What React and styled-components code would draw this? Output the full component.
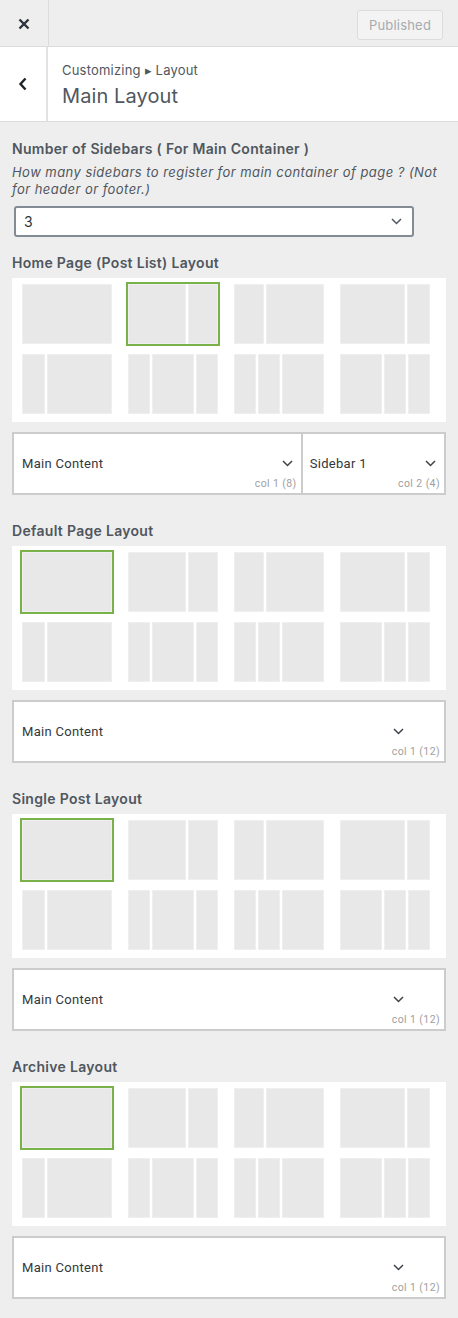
import React from 'react';
import styled, { createGlobalStyle } from 'styled-components';

const sysFont = `Inter, "Noto Sans", "Liberation Sans", sans-serif`;
const green = '#7ab24a';
const textGray = '#50575e';

const GlobalStyle = createGlobalStyle`
  html, body {
    margin: 0;
    padding: 0;
    background: #eeeeee;
  }
  body {
    font-family: ${sysFont};
    color: ${textGray};
  }
  * {
    box-sizing: border-box;
  }
`;

const Page = styled.div`
  width: 458px;
  min-height: 1318px;
  background: #eeeeee;
`;

const TopBar = styled.div`
  display: flex;
  align-items: center;
  justify-content: space-between;
  height: 47px;
  background: #eeeeee;
  border-bottom: 1px solid #dcdcde;
`;

const CloseButton = styled.div`
  display: flex;
  align-items: center;
  justify-content: center;
  width: 49px;
  height: 46px;
  padding-top: 1px;
  border-right: 1px solid #dcdcde;
`;

const PublishedButton = styled.div`
  margin: 4px 15px 0 0;
  width: 86px;
  height: 30px;
  display: flex;
  align-items: center;
  justify-content: center;
  border: 1px solid #dcdcde;
  border-radius: 3px;
  background: #f3f3f3;
  color: #a7aaad;
  font-size: 13px;
  letter-spacing: 0.2px;
`;

const TitleBar = styled.div`
  display: flex;
  height: 75px;
  background: #fff;
  border-bottom: 1px solid #dcdcde;
`;

const BackButton = styled.div`
  display: flex;
  align-items: center;
  justify-content: center;
  width: 48px;
  border-right: 2px solid #e2e2e4;
`;

const TitleText = styled.div`
  display: flex;
  flex-direction: column;
  justify-content: center;
  padding: 1px 0 0 14px;
`;

const Breadcrumb = styled.div`
  font-size: 13px;
  line-height: 18px;
  color: ${textGray};
  letter-spacing: 0.2px;
`;

const PageTitle = styled.div`
  font-size: 20px;
  line-height: 26px;
  margin-top: 4px;
  color: ${textGray};
  letter-spacing: 0.1px;
`;

const Content = styled.div`
  padding: 17px 12px 20px;
`;

const Label = styled.div`
  font-size: 14px;
  font-weight: 600;
  line-height: 20px;
  color: ${textGray};
  letter-spacing: 0.3px;
`;

const Description = styled.div`
  margin-top: 5px;
  font-size: 13px;
  font-style: italic;
  line-height: 17px;
  color: ${textGray};
  letter-spacing: 0.45px;
`;

const NativeSelect = styled.div`
  display: flex;
  align-items: center;
  justify-content: space-between;
  margin: 8px 0 16px 2px;
  width: 400px;
  height: 31px;
  padding: 0 10px 0 8px;
  background: #fff;
  border: 2px solid #838c95;
  border-radius: 3px;
  font-size: 14px;
  color: #2c3338;
`;

const Section = styled.section`
  margin-bottom: 26px;
`;

const LayoutPanel = styled.div`
  margin-top: 5px;
  background: #fff;
  padding: 6px 0 8px 10px;
  display: grid;
  grid-template-columns: repeat(4, 90px);
  column-gap: 16px;
  row-gap: 10px;
`;

const Thumb = styled.div`
  display: flex;
  gap: 2px;
  width: 90px;
  height: 60px;
  outline: ${p => (p.$active ? `2px solid ${green}` : 'none')};
  background: #fff;
`;

const Cell = styled.div`
  flex: ${p => p.$span} 1 0;
  background: #e8e8e8;
  border: 1px solid #efefef;
`;

const ColumnRow = styled.div`
  display: flex;
  margin-top: 10px;
  height: 63px;
  background: #fff;
  border: 2px solid #cccccc;
`;

const Column = styled.div`
  flex: 0 0 ${p => (p.$span / 12) * 100}%;
  display: flex;
  flex-direction: column;
  padding: 20px 4px 0 ${p => (p.$first ? 8 : 7)}px;
  border-left: ${p => (p.$first ? 'none' : '2px solid #cccccc')};
`;

const ColumnSelect = styled.div`
  display: flex;
  align-items: center;
  justify-content: space-between;
  width: 100%;
  max-width: 386px;
  height: 18px;
  padding-right: 4px;
  font-family: Roboto, "Liberation Sans", sans-serif;
  font-size: 13px;
  color: #32373c;
  letter-spacing: 0.3px;
`;

const ColumnNote = styled.div`
  margin-top: 5px;
  text-align: right;
  font-family: Roboto, "Liberation Sans", sans-serif;
  font-size: 10.5px;
  line-height: 14px;
  color: #a0a0a0;
  letter-spacing: 0.4px;
`;

const CloseIcon = () => (
  <svg width="12" height="12" viewBox="0 0 12 12">
    <path d="M1.5 1.5 L10.5 10.5 M10.5 1.5 L1.5 10.5" stroke="#2c3338" strokeWidth="2.4" strokeLinecap="butt" />
  </svg>
);

const BackIcon = () => (
  <svg width="10" height="14" viewBox="0 0 10 14">
    <path d="M7.5 1.5 L2.5 7 L7.5 12.5" stroke="#1d2327" strokeWidth="2.4" fill="none" />
  </svg>
);

const Chevron = ({ color = '#50575e' }) => (
  <svg width="11" height="7" viewBox="0 0 11 7">
    <path d="M1 1 L5.5 5.5 L10 1" stroke={color} strokeWidth="1.5" fill="none" />
  </svg>
);

const thumbs = [
  [12],
  [8, 4],
  [4, 8],
  [9, 3],
  [3, 9],
  [3, 6, 3],
  [3, 3, 6],
  [6, 3, 3],
];

const sections = [
  {
    title: 'Home Page (Post List) Layout',
    active: 1,
    columns: [
      { label: 'Main Content', note: 'col 1 (8)', span: 8 },
      { label: 'Sidebar 1', note: 'col 2 (4)', span: 4 },
    ],
  },
  {
    title: 'Default Page Layout',
    active: 0,
    columns: [{ label: 'Main Content', note: 'col 1 (12)', span: 12 }],
  },
  {
    title: 'Single Post Layout',
    active: 0,
    columns: [{ label: 'Main Content', note: 'col 1 (12)', span: 12 }],
  },
  {
    title: 'Archive Layout',
    active: 0,
    columns: [{ label: 'Main Content', note: 'col 1 (12)', span: 12 }],
  },
];

const LayoutSection = ({ title, active, columns }) => (
  <Section>
    <Label>{title}</Label>
    <LayoutPanel>
      {thumbs.map((cells, i) => (
        <Thumb key={i} $active={i === active}>
          {cells.map((span, j) => (
            <Cell key={j} $span={span} />
          ))}
        </Thumb>
      ))}
    </LayoutPanel>
    <ColumnRow>
      {columns.map((col, i) => (
        <Column key={i} $span={col.span} $first={i === 0}>
          <ColumnSelect>
            <span>{col.label}</span>
            <Chevron color="#3c434a" />
          </ColumnSelect>
          <ColumnNote>{col.note}</ColumnNote>
        </Column>
      ))}
    </ColumnRow>
  </Section>
);

export default function App() {
  return (
    <Page>
      <GlobalStyle />
      <TopBar>
        <CloseButton>
          <CloseIcon />
        </CloseButton>
        <PublishedButton>Published</PublishedButton>
      </TopBar>
      <TitleBar>
        <BackButton>
          <BackIcon />
        </BackButton>
        <TitleText>
          <Breadcrumb>Customizing ▸ Layout</Breadcrumb>
          <PageTitle>Main Layout</PageTitle>
        </TitleText>
      </TitleBar>
      <Content>
        <Label>Number of Sidebars ( For Main Container )</Label>
        <Description>
          How many sidebars to register for main container of page ? (Not for header or footer.)
        </Description>
        <NativeSelect>
          <span>3</span>
          <Chevron color="#50575e" />
        </NativeSelect>
        {sections.map(s => (
          <LayoutSection key={s.title} {...s} />
        ))}
      </Content>
    </Page>
  );
}
